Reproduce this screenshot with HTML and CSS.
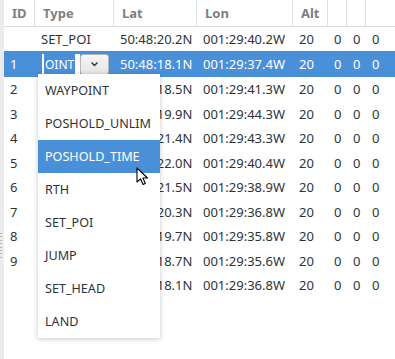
FILE: index.html
```html
<!DOCTYPE html>
<html lang="en">
<head>
    <meta charset="UTF-8">
    <title>Mission</title>
    <link rel="stylesheet" href="styles.css">
</head>
<body>
<div class="window">
    <div class="handle"><div class="grip"></div></div>
    <div class="table">
        <div class="row head">
            <span>ID</span><span>Type</span><span>Lat</span><span>Lon</span><span>Alt</span><span></span><span></span><span></span>
        </div>
        <div class="row first">
            <span></span><span>SET_POI</span><span>50:48:20.2N</span><span>001:29:40.2W</span><span>20</span><span>0</span><span>0</span><span>0</span>
        </div>
        <div class="row selected">
            <span>1</span>
            <span class="editor">
                <span class="entry"><span class="caret"></span><span class="sel">OINT</span></span>
                <span class="drop">
                    <svg width="9" height="6" viewBox="0 0 9 6"><path d="M1.5 1.5 L4.5 4.5 L7.5 1.5" fill="none" stroke="#2e3436" stroke-width="1.4"/></svg>
                </span>
            </span>
            <span>50:48:18.1N</span><span>001:29:37.4W</span><span>20</span><span>0</span><span>0</span><span>0</span>
        </div>
        <div class="row"><span>2</span><span></span><span>50:48:18.5N</span><span>001:29:41.3W</span><span>20</span><span>0</span><span>0</span><span>0</span></div>
        <div class="row"><span>3</span><span></span><span>50:48:19.9N</span><span>001:29:44.3W</span><span>20</span><span>0</span><span>0</span><span>0</span></div>
        <div class="row"><span>4</span><span></span><span>50:48:21.4N</span><span>001:29:43.3W</span><span>20</span><span>0</span><span>0</span><span>0</span></div>
        <div class="row"><span>5</span><span></span><span>50:48:22.0N</span><span>001:29:40.4W</span><span>20</span><span>0</span><span>0</span><span>0</span></div>
        <div class="row"><span>6</span><span></span><span>50:48:21.5N</span><span>001:29:38.9W</span><span>20</span><span>0</span><span>0</span><span>0</span></div>
        <div class="row"><span>7</span><span></span><span>50:48:20.3N</span><span>001:29:36.8W</span><span>20</span><span>0</span><span>0</span><span>0</span></div>
        <div class="row"><span>8</span><span></span><span>50:48:19.7N</span><span>001:29:35.8W</span><span>20</span><span>0</span><span>0</span><span>0</span></div>
        <div class="row"><span>9</span><span></span><span>50:48:18.7N</span><span>001:29:35.6W</span><span>20</span><span>0</span><span>0</span><span>0</span></div>
        <div class="row"><span></span><span>SET_POI</span><span>50:48:18.1N</span><span>001:29:36.8W</span><span>20</span><span>0</span><span>0</span><span>0</span></div>
    </div>

    <!-- combo popup -->
    <ul class="popup">
        <li>WAYPOINT</li>
        <li>POSHOLD_UNLIM</li>
        <li class="hover">POSHOLD_TIME</li>
        <li>RTH</li>
        <li>SET_POI</li>
        <li>JUMP</li>
        <li>SET_HEAD</li>
        <li>LAND</li>
    </ul>

    <svg class="pointer" width="13" height="19" viewBox="0 0 13 19">
        <path d="M1 1 L1 15 L4.5 11.8 L7 17.5 L9.3 16.5 L6.9 11 L11.5 11 Z" fill="#fff" stroke="#000" stroke-width="1.1" stroke-linejoin="round"/>
    </svg>
</div>
</body>
</html>
```

FILE: styles.css
```css
* {
    box-sizing: border-box;
    margin: 0;
    padding: 0;
}

body {
    font-family: "Noto Sans", "DejaVu Sans", sans-serif;
    font-size: 13px;
    color: #2e3436;
    background-color: #fff;
}

.window {
    position: relative;
    display: flex;
    width: 395px;
    height: 359px;
    overflow: hidden;
}

/* Pane handle on the left */
.handle {
    width: 4px;
    background-color: #ececec;
    flex-shrink: 0;
    padding-top: 233px;
}

.grip {
    width: 2px;
    height: 27px;
    background: repeating-linear-gradient(to bottom, #b8b8b8 0 1px, transparent 1px 3.4px);
}

.table {
    flex: 1;
}

.row {
    display: grid;
    grid-template-columns: 31px 79px 83px 96px 35px 19px 19px 29px;
    height: 24.5px;
    align-items: center;
    white-space: nowrap;
}

.row > span {
    padding-left: 6px;
    overflow: hidden;
}

/* Header */
.head {
    height: 27px;
    border-bottom: 1px solid #dcdcdc;
    align-items: stretch;
    color: #7f7f7f;
    font-weight: bold;
}

.head > span {
    display: flex;
    align-items: center;
    padding-left: 8px;
    border-right: 1px solid #e1e1e1;
}

.head > span:last-child {
    border-right: none;
}

.first {
    height: 24px;
}

.selected {
    height: 26px;
    background-color: #4a90d9;
    color: #fff;
}

/* In-place combo editor */
.row > .editor {
    display: flex;
    align-items: center;
    padding-left: 7px;
    height: 100%;
    overflow: visible;
}

.entry {
    display: flex;
    align-items: center;
    background-color: #fff;
    width: 38px;
    height: 21px;
    flex-shrink: 0;
}

.caret {
    width: 2px;
    height: 13px;
    background-color: #fff;
    flex-shrink: 0;
}

.sel {
    background-color: #4a90d9;
    color: #fff;
    font-size: 12px;
    padding: 0 1px;
    line-height: 21px;
    flex-shrink: 0;
}

.drop {
    display: flex;
    align-items: center;
    justify-content: center;
    width: 29px;
    height: 21px;
    flex-shrink: 0;
    background: linear-gradient(#f6f6f6, #e4e4e4);
    border: 1px solid #b6b6b3;
    border-radius: 3px;
}

/* Dropdown list */
.popup {
    position: absolute;
    left: 38px;
    top: 74px;
    width: 122px;
    list-style: none;
    background-color: #fff;
    box-shadow: 0 1px 5px rgba(0,0,0,0.22);
    font-size: 12.6px;
}

.popup li {
    height: 33px;
    line-height: 33px;
    padding-left: 7px;
    white-space: nowrap;
}

.popup li.hover {
    background-color: #4a90d9;
    color: #fff;
}

.pointer {
    position: absolute;
    left: 136px;
    top: 167px;
}
```
